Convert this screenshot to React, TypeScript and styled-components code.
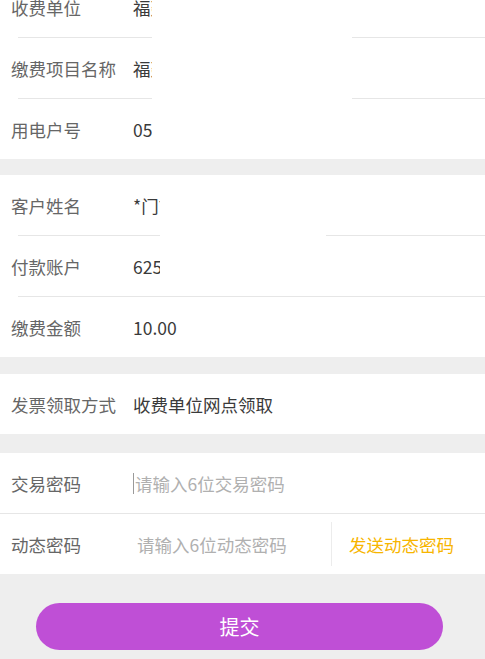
import React from 'react';
import styled, { createGlobalStyle } from 'styled-components';

const GlobalStyle = createGlobalStyle`
	html, body {
		margin: 0;
		padding: 0;
		background: #eeeeee;
		font-family: "Noto Sans CJK SC", "Noto Sans", sans-serif;
	}
	#root {
		min-height: 659px;
		overflow: hidden;
	}
`;

const Page = styled.div`
	width: 485px;
	margin-top: -23px;
	padding-bottom: 40px;
`;

const Section = styled.section<{ $gap?: number }>`
	position: relative;
	background: #fff;
	margin-top: ${ p => p.$gap ?? 0 }px;
`;

const Row = styled.div<{ $inset?: number; $line?: boolean }>`
	position: relative;
	display: flex;
	align-items: center;
	height: 60px;
	padding-left: 11px;
	box-sizing: border-box;
	&::after {
		content: '';
		display: ${ p => (p.$line ? 'block' : 'none') };
		position: absolute;
		left: ${ p => p.$inset ?? 18 }px;
		right: 0;
		bottom: -1px;
		height: 1px;
		background: #e6e6e6;
	}
	& + & {
		margin-top: 1px;
	}
`;

const Label = styled.div`
	width: 122px;
	flex-shrink: 0;
	font-size: 17.5px;
	color: #666;
`;

const Value = styled.div`
	font-size: 17.5px;
	color: #3a3a3a;
	white-space: nowrap;
`;

const Field = styled.div`
	display: flex;
	align-items: center;
	flex: 1;
	height: 100%;
`;

const Caret = styled.span`
	width: 1px;
	height: 21px;
	background: #9a9a9a;
	margin-right: 1px;
`;

const Placeholder = styled.span<{ $indent?: number }>`
	font-size: 17.5px;
	color: #b0b0b0;
	padding-left: ${ p => p.$indent ?? 0 }px;
	white-space: nowrap;
`;

const SendCode = styled.button`
	height: 44px;
	width: 154px;
	flex-shrink: 0;
	border: 0;
	border-left: 1px solid #ececec;
	background: transparent;
	padding: 0 0 0 17px;
	text-align: left;
	font-family: inherit;
	font-size: 17.5px;
	color: #f7b500;
`;

// 遮挡块（原图中被打码的区域）
const Mask = styled.div<{ $left: number; $width: number; $height: number }>`
	position: absolute;
	top: 0;
	left: ${ p => p.$left }px;
	width: ${ p => p.$width }px;
	height: ${ p => p.$height }px;
	background: #fff;
	z-index: 2;
`;

const Submit = styled.button`
	display: block;
	width: 407px;
	height: 47px;
	margin: 29px 0 0 36px;
	border: 0;
	border-radius: 24px;
	background: #bf4fd6;
	color: #fff;
	font-family: inherit;
	font-size: 20px;
	cursor: pointer;
`;

const App = () => (
	<>
		<GlobalStyle />
		<Page>
			<Section>
				<Row $line>
					<Label>收费单位</Label>
					<Value>福建省电力有限公司</Value>
				</Row>
				<Row $line>
					<Label>缴费项目名称</Label>
					<Value>福建电费</Value>
				</Row>
				<Row>
					<Label>用电户号</Label>
					<Value>0512345678</Value>
				</Row>
				<Mask $left={152} $width={200} $height={182} />
			</Section>

			<Section $gap={16}>
				<Row $line>
					<Label>客户姓名</Label>
					<Value>*门市</Value>
				</Row>
				<Row $line>
					<Label>付款账户</Label>
					<Value>6259 **** **** 1234</Value>
				</Row>
				<Row>
					<Label>缴费金额</Label>
					<Value>10.00</Value>
				</Row>
				<Mask $left={160} $width={166} $height={120} />
			</Section>

			<Section $gap={17}>
				<Row>
					<Label>发票领取方式</Label>
					<Value>收费单位网点领取</Value>
				</Row>
			</Section>

			<Section $gap={19}>
				<Row $line $inset={0}>
					<Label>交易密码</Label>
					<Field>
						<Caret />
						<Placeholder>请输入6位交易密码</Placeholder>
					</Field>
				</Row>
				<Row>
					<Label>动态密码</Label>
					<Field>
						<Placeholder $indent={4}>请输入6位动态密码</Placeholder>
					</Field>
					<SendCode>发送动态密码</SendCode>
				</Row>
			</Section>

			<Submit>提交</Submit>
		</Page>
	</>
);

export default App;
